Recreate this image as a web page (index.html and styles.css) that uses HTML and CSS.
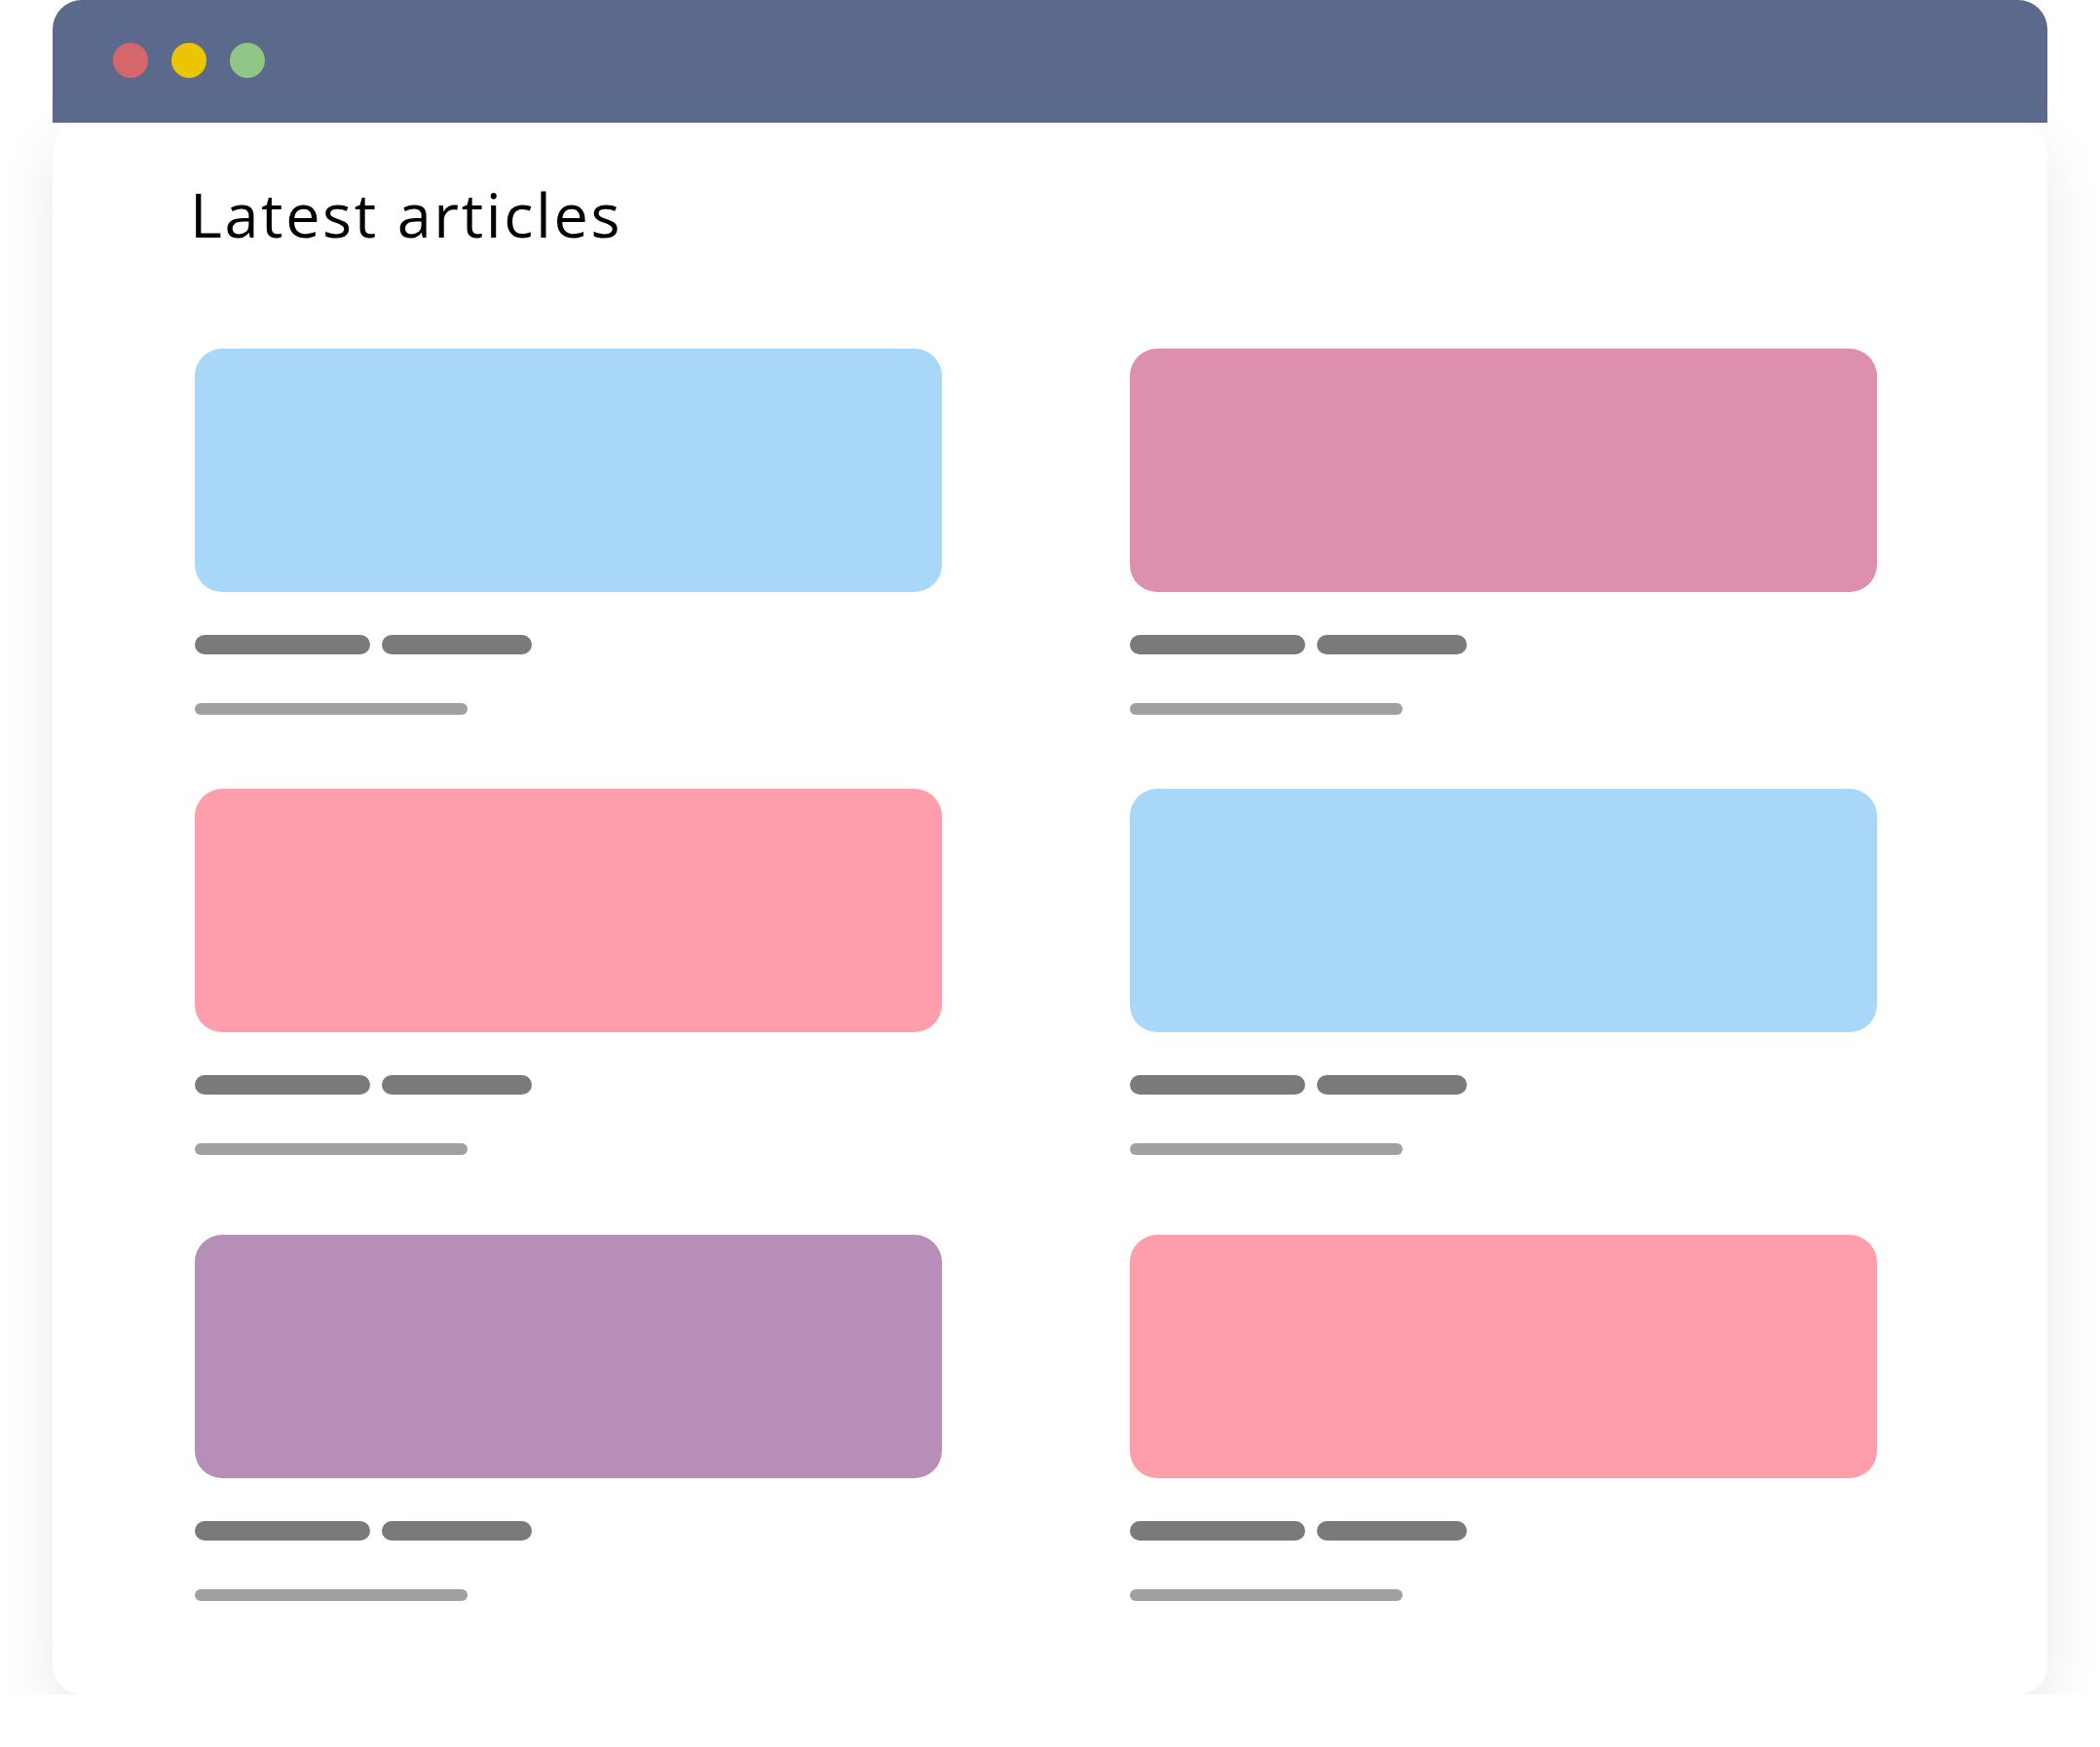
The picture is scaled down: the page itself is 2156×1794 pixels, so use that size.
FILE: index.html
```html
<!DOCTYPE html>
<html lang="en">
<head>
<meta charset="utf-8">
<title>Latest articles</title>
<link rel="stylesheet" href="styles.css">
</head>
<body>
<div class="window">
  <div class="titlebar">
    <span class="dot dot-red"></span>
    <span class="dot dot-yellow"></span>
    <span class="dot dot-green"></span>
  </div>
  <div class="panel">
    <h1 class="title">Latest articles</h1>
    <div class="grid">
      <div class="card">
        <div class="thumb blue"></div>
        <div class="tags"><span class="tag tag-a"></span><span class="tag tag-b"></span></div>
        <div class="line"></div>
      </div>
      <div class="card">
        <div class="thumb rose"></div>
        <div class="tags"><span class="tag tag-a"></span><span class="tag tag-b"></span></div>
        <div class="line"></div>
      </div>
      <div class="card">
        <div class="thumb pink"></div>
        <div class="tags"><span class="tag tag-a"></span><span class="tag tag-b"></span></div>
        <div class="line"></div>
      </div>
      <div class="card">
        <div class="thumb blue"></div>
        <div class="tags"><span class="tag tag-a"></span><span class="tag tag-b"></span></div>
        <div class="line"></div>
      </div>
      <div class="card card-last-row">
        <div class="thumb purple"></div>
        <div class="tags"><span class="tag tag-a"></span><span class="tag tag-b"></span></div>
        <div class="line"></div>
      </div>
      <div class="card card-last-row">
        <div class="thumb pink"></div>
        <div class="tags"><span class="tag tag-a"></span><span class="tag tag-b"></span></div>
        <div class="line"></div>
      </div>
    </div>
  </div>
</div>
</body>
</html>
```
FILE: styles.css
```css
html, body {
  margin: 0;
  padding: 0;
  background: #ffffff;
}

body {
  font-family: "Open Sans", "Liberation Sans", sans-serif;
}

.window {
  margin-left: 54px;
  width: 2048px;
}

.titlebar {
  position: relative;
  z-index: 1;
  height: 126px;
  background: #5b6a8c;
  border-radius: 30px 30px 0 0;
  display: flex;
  align-items: center;
  gap: 24px;
  padding-left: 62px;
  box-sizing: border-box;
}

.dot {
  width: 36px;
  height: 36px;
  border-radius: 50%;
  display: block;
  margin-top: -2px;
}

.dot-red { background: #d5676b; }
.dot-yellow { background: #ebc500; }
.dot-green { background: #91c786; }

.panel {
  background: #ffffff;
  border-radius: 30px;
  box-shadow: 0 20px 60px rgba(0, 0, 0, 0.09);
  height: 1614px;
  box-sizing: border-box;
  padding: 62px 175px 0 141px;
}

.title {
  margin: 0;
  font-size: 63px;
  line-height: 63px;
  font-weight: 400;
  color: #000000;
  letter-spacing: 2.6px;
}

.grid {
  margin-top: 107px;
  display: grid;
  grid-template-columns: 767px 767px;
  column-gap: 193px;
  row-gap: 76px;
  padding-left: 5px;
}

.card {
  display: flex;
  flex-direction: column;
  align-items: flex-start;
}

.card-last-row {
  margin-top: 6px;
}

.thumb {
  align-self: stretch;
  height: 250px;
  border-radius: 28px;
}

.blue { background: #a9d7f7; }
.rose { background: #de8fae; }
.pink { background: #fe9ead; }
.purple { background: #b78eb8; }

.tags {
  margin-top: 44px;
  display: flex;
  gap: 12px;
}

.tag {
  display: block;
  height: 20px;
  border-radius: 10px;
  background: #7b797a;
}

.tag-a { width: 180px; }
.tag-b { width: 154px; }

.line {
  margin-top: 50px;
  width: 280px;
  height: 12px;
  border-radius: 6px;
  background: #a0a0a0;
}
```
